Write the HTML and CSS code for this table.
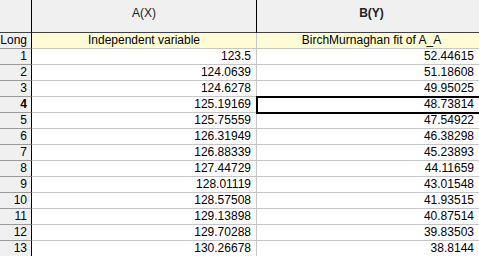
FILE: index.html
```html
<!DOCTYPE html>
<html>
<head>
<meta charset="utf-8">
<link rel="stylesheet" href="styles.css">
</head>
<body>
<div class="sheet">
  <div class="c corner"></div>
  <div class="c colhead">A(X)</div>
  <div class="c colhead bold">B(Y)</div>

  <div class="c rowhead">Long</div>
  <div class="c longname">Independent variable</div>
  <div class="c longname">BirchMurnaghan fit of A_A</div>

  <div class="c rowhead">1</div><div class="c num">123.5</div><div class="c num b">52.44615</div>
  <div class="c rowhead">2</div><div class="c num">124.0639</div><div class="c num b">51.18608</div>
  <div class="c rowhead">3</div><div class="c num">124.6278</div><div class="c num b">49.95025</div>
  <div class="c rowhead bold">4</div><div class="c num">125.19169</div><div class="c num b sel">48.73814</div>
  <div class="c rowhead">5</div><div class="c num">125.75559</div><div class="c num b">47.54922</div>
  <div class="c rowhead">6</div><div class="c num">126.31949</div><div class="c num b">46.38298</div>
  <div class="c rowhead">7</div><div class="c num">126.88339</div><div class="c num b">45.23893</div>
  <div class="c rowhead">8</div><div class="c num">127.44729</div><div class="c num b">44.11659</div>
  <div class="c rowhead">9</div><div class="c num">128.01119</div><div class="c num b">43.01548</div>
  <div class="c rowhead">10</div><div class="c num">128.57508</div><div class="c num b">41.93515</div>
  <div class="c rowhead">11</div><div class="c num">129.13898</div><div class="c num b">40.87514</div>
  <div class="c rowhead">12</div><div class="c num">129.70288</div><div class="c num b">39.83503</div>
  <div class="c rowhead">13</div><div class="c num">130.26678</div><div class="c num b">38.8144</div>
</div>
</body>
</html>
```

FILE: styles.css
```css
html, body {
  margin: 0;
  padding: 0;
  background: #ffffff;
  overflow: hidden;
}
.sheet {
  display: grid;
  grid-template-columns: 32px 225px 230px;
  grid-template-rows: 33px repeat(14, 16px);
  font-family: "Liberation Sans", Arial, sans-serif;
  font-size: 12px;
  color: #000;
  width: 487px;
}
.c {
  box-sizing: border-box;
  border-right: 1px solid #c6c6c6;
  border-bottom: 1px solid #c6c6c6;
  line-height: 15px;
  white-space: nowrap;
  overflow: hidden;
}
.corner {
  background: #f0f0f0;
  border-right: 1px solid #000;
  border-bottom: 1px solid #404040;
}
.colhead {
  background: #f0f0f0;
  border-right: 1px solid #000;
  border-bottom: 1px solid #404040;
  text-align: center;
  padding-top: 6px;
  color: #202020;
}
.bold {
  font-weight: bold;
}
.rowhead {
  background: #f0f0f0;
  border-right: 1px solid #000;
  border-bottom: 1px solid #9a9a9a;
  text-align: right;
  padding-right: 4px;
}
.longname {
  background: #fefcd4;
  text-align: center;
  border-bottom: 1px solid #c6c6c6;
}
.num {
  text-align: right;
  padding-right: 5px;
}
.num.b {
  padding-right: 12px;
}
.sel {
  outline: 2px solid #000;
  outline-offset: -1px;
  position: relative;
  z-index: 1;
}
```
